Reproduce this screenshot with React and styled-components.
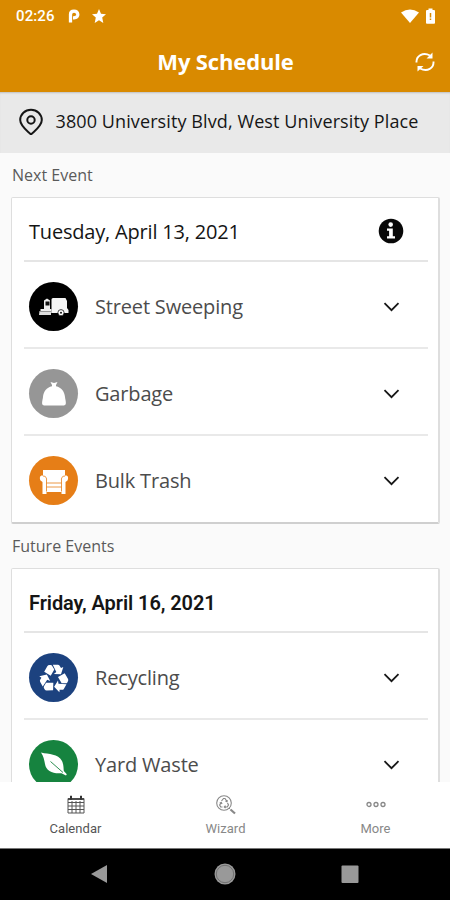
import React from "react";
import styled, { createGlobalStyle } from "styled-components";

const GlobalStyle = createGlobalStyle`
  * { box-sizing: border-box; }
  body { margin: 0; background: #fafafa; font-family: "Open Sans", sans-serif; }
  svg { display: block; flex: none; }
`;

const Screen = styled.div`
  width: 450px;
  height: 900px;
  display: flex;
  flex-direction: column;
  overflow: hidden;
  background: #fafafa;
`;

const StatusBar = styled.div`
  height: 32px;
  flex: none;
  display: flex;
  align-items: center;
  padding: 0 15px 0 16px;
  background: #d98a00;
  color: #fff;
`;

const Clock = styled.span`
  font: 500 15px/32px Roboto, sans-serif;
  letter-spacing: 0.1px;
  width: 52px;
`;

const StatusIcons = styled.div`
  display: flex;
  align-items: center;
  gap: ${(p) => p.$gap}px;
  margin-left: ${(p) => (p.$end ? "auto" : "0")};
`;

const AppBar = styled.header`
  height: 60px;
  flex: none;
  display: grid;
  grid-template-columns: 50px 1fr 50px;
  align-items: center;
  justify-items: center;
  background: #d98a00;
  color: #fff;
`;

const Title = styled.h1`
  grid-column: 2;
  margin: 0;
  padding: 0 0 2px 1px;
  font-size: 22px;
  line-height: 30px;
  font-weight: 700;
  letter-spacing: -0.15px;
`;

const AddressBar = styled.div`
  height: 61px;
  flex: none;
  display: flex;
  align-items: center;
  padding: 0 0 3px 18px;
  gap: 11.5px;
  background: #e9e9e9;
  box-shadow: inset 0 2px 2px -1px rgba(0, 0, 0, 0.18);
  color: #161616;
`;

const Address = styled.span`
  font-size: 18px;
  line-height: 26px;
  white-space: nowrap;
  letter-spacing: 0.1px;
`;

const Content = styled.main`
  flex: 1;
  min-height: 0;
  overflow: hidden;
  padding: 0 10px 0 11px;
`;

const SectionLabel = styled.h2`
  margin: 0;
  height: 44px;
  line-height: 45px;
  font-size: 16px;
  font-weight: 400;
  color: #5a5a5a;
  padding-left: 1px;
`;

const Card = styled.section`
  height: 327px;
  border: 1px solid #dedede;
  border-width: 1px 2px 2px 1px;
  border-bottom-color: #cfcfcf;
  border-radius: 2px;
  background: #fff;
  padding: 0 10px 0 12px;
`;

const DateRow = styled.div`
  height: 64px;
  display: flex;
  align-items: center;
  justify-content: space-between;
  padding: 4px 24px 0 5px;
  border-bottom: 2px solid #e5e5e5;
`;

const DateText = styled.h3`
  margin: 0;
  padding-top: 1px;
  font-family: ${(p) => (p.$strong ? "Roboto" : '"Open Sans"')}, sans-serif;
  font-size: 20px;
  line-height: 28px;
  font-weight: ${(p) => (p.$strong ? 600 : 400)};
  letter-spacing: ${(p) => (p.$strong ? -0.08 : -0.19)}px;
  color: #151515;
`;

const EventRow = styled.div`
  height: 87px;
  display: flex;
  align-items: center;
  padding: 4px 27px 0 5px;
  border-bottom: 2px solid #e9e9e9;
  &:last-child { border-bottom: 0; padding-top: 2px; }
`;

const Badge = styled.div`
  width: 49px;
  height: 49px;
  flex: none;
  border-radius: 50%;
  display: grid;
  place-items: center;
  color: #fff;
  background: ${(p) => p.$color};
`;

const EventName = styled.span`
  flex: 1;
  padding-left: 17px;
  font-size: 20px;
  line-height: 28px;
  font-weight: 400;
  letter-spacing: -0.17px;
  color: #4c4c4c;
`;

const TabBar = styled.nav`
  height: 66px;
  flex: none;
  display: grid;
  grid-template-columns: repeat(3, 1fr);
  background: #fff;
`;

const Tab = styled.div`
  display: flex;
  flex-direction: column;
  align-items: center;
  padding: 13px 0 0 1px;
  gap: 5px;
  color: ${(p) => (p.$active ? "#555" : "#888")};
`;

const TabLabel = styled.span`
  font: 400 13px/18px Roboto, sans-serif;
  letter-spacing: 0.05px;
`;

const SystemNav = styled.div`
  height: 52px;
  flex: none;
  display: flex;
  justify-content: center;
  align-items: center;
  gap: 102px;
  background: #000;
  border-top: 1px solid #777;
  padding-bottom: 1px;
`;

const Chevron = () => (
  <svg width="18" height="12" viewBox="0 0 18 12" fill="none" stroke="#171717" strokeWidth="1.8">
    <path d="M1.500 2.200l7 7 7-7" />
  </svg>
);

const InfoIcon = () => (
  <svg width="26" height="26" viewBox="0 0 26 26">
    <circle cx="13" cy="13" r="12.3" fill="#080808" />
    <circle cx="12.7" cy="6.6" r="2.3" fill="#fff" />
    <path d="M9 10.500h5.800v7.800H17v2.300H9v-2.300h2.100v-5.500H9z" fill="#fff" />
  </svg>
);

const TruckIcon = () => (
  <svg width="32" height="22" viewBox="0 0 32 22">
    <path d="M13.500 3.500q0-1.500 1.500-1.500h12.500l1.500 3v7l1.500 2v3H13.500z" fill="#f4f4f4" />
    <path d="M6 4.500L9 2.500l3 2V13h1.500v4H2.500v-4H6z" fill="#eee" />
    <path d="M7.500 5.500h4v4h-4z" fill="#111" />
    <path d="M1.500 15h11.500v4H1z" fill="#ddd" />
    <path d="M2 15.500h11" stroke="#777" strokeWidth=".7" />
    <circle cx="23" cy="16.700" r="3.100" fill="#fff" stroke="#111" strokeWidth=".8" />
    <circle cx="23" cy="16.700" r="1" fill="#111" />
  </svg>
);

const BagIcon = () => (
  <svg width="28" height="28" viewBox="0 0 28 28" fill="currentColor">
    <path d="M10.500 2l3.500 1 3.500-1-1.500 3v1.300c5.500 1.200 8.500 5.200 9 10.700.3 3 2.300 8-1 8.500H4C.700 25 2.700 20 3 17 3.500 11.500 6.500 7.500 12 6.300V5z" />
  </svg>
);

const ChairIcon = () => (
  <svg width="30" height="30" viewBox="0 0 30 30">
    <path d="M4 4h22v5.700c2.700-.7 4 1.800 2.500 4.800L26.500 16v12H22.500v-2h-15v2H3.500V16L1.500 14.500C0 11.500 1.300 9 4 9.700z" fill="#fff" />
    <path d="M4 10c3 0 4 2 3.500 5v10.500m18.500-15.500c-3 0-4 2-3.500 5v10.500M7.500 17h15M7.500 21h15" fill="none" stroke="#e67e17" strokeWidth=".8" />
  </svg>
);

const RecycleIcon = () => (
  <svg width="30" height="30" viewBox="0 0 30 30" fill="currentColor">
    {[0, 120, 240].map((turn) => (
      <g key={turn} transform={`rotate(${turn} 15 15.500)`}>
        <path d="M5.200 8.800L8.300 3.300Q9 2 10.500 2H11.700Q12.700 2 13.200 2.900L15.300 6.500 11.700 12.800z" />
        <path d="M13.800 1.800H18.800Q20.200 1.800 20.800 2.900L22 5 24.300 3.900 22 11.300 14.800 11 17.300 9z" />
      </g>
    ))}
  </svg>
);

const LeafIcon = () => (
  <svg width="30" height="28" viewBox="0 0 30 28">
    <path d="M2 1.500c8 2 17 1 21 8.500 1.800 4 1.500 7.500 1.800 10l3 3.200-.8 1.200-4.500-2.200C14 23 7 20 6 13 5.200 9 4.500 5 2 1.500z" fill="#fff" />
    <path d="M11.500 10.500l12.500 11" stroke="#16833f" strokeWidth=".9" />
  </svg>
);

const CalendarIcon = () => (
  <svg width="18" height="20" viewBox="0 0 18 20" fill="none" stroke="currentColor">
    <path d="M1 3.500h16v14.500H1zM1 7.500h16M1 11h16M1 14.500h16M5 6v12M9 6v12M13 6v12" strokeWidth="1" />
    <path d="M1 4.200h16" stroke="#444" strokeWidth="1.500" />
    <path d="M4 .8v4M14 .8v4" stroke="#333" strokeWidth="2" />
  </svg>
);

const WizardIcon = () => (
  <svg width="22" height="20" viewBox="0 0 22 20" fill="none" stroke="currentColor">
    <circle cx="9" cy="8" r="7.300" strokeWidth="1.100" />
    <path d="M14 13l1.200 1.200" strokeWidth="1" />
    <path d="M15.500 14.500l4.500 4" strokeWidth="2.200" />
    <path d="M6.500 6l2-2.500h1.500l2 3M10.500 6.200l1.500.5.3-1.600M12.500 8l1 2-1.300 2H9.500m1-1.300L9.300 12l1.200 1.200M7.500 12H5.700l-1-2 1.500-2.500M4.700 8l1.600-.5.7 1.500" strokeWidth="1.200" />
  </svg>
);

const MoreIcon = () => (
  <svg width="20" height="20" viewBox="0 0 20 20" fill="none" stroke="currentColor" strokeWidth="1.300">
    <circle cx="3" cy="9.500" r="2" />
    <circle cx="10" cy="9.500" r="2" />
    <circle cx="17" cy="9.500" r="2" />
  </svg>
);

const Event = ({ name, color, icon }) => (
  <EventRow>
    <Badge $color={color}>{icon}</Badge>
    <EventName>{name}</EventName>
    <Chevron />
  </EventRow>
);

export default function App() {
  return (
    <Screen>
      <GlobalStyle />
      <StatusBar>
        <Clock>02:26</Clock>
        <StatusIcons $gap={12}>
          <svg width="12" height="14" viewBox="0 0 12 14" fill="none" stroke="#fff">
            <path d="M2.500 13.500V5.500Q2.500 2.200 6 2.200t3.800 3.200T6 8.800H5" strokeWidth="3.300" />
          </svg>
          <svg width="14" height="14" viewBox="0 0 14 14" fill="#fff">
            <path d="M7 0l2 4.800 5 .4-3.800 3.400L11.300 14 7 11.200 2.700 14l1.100-5.400L0 5.200l5-.4z" />
          </svg>
        </StatusIcons>
        <StatusIcons $gap={7} $end>
          <svg width="18" height="14" viewBox="0 0 18 14" fill="#fff">
            <path d="M0 3.500Q9-2.500 18 3.500L9 14z" />
          </svg>
          <svg width="9" height="16" viewBox="0 0 9 16">
            <path d="M1 2h1.500V.5h4V2H8q1 0 1 1v12q0 .8-1 .8H1q-1 0-1-.8V3q0-1 1-1z" fill="#fff" />
            <path d="M4.500 5v4.500M4.500 10.500V12" stroke="#d98a00" strokeWidth="1.500" />
          </svg>
        </StatusIcons>
      </StatusBar>
      <AppBar>
        <Title>My Schedule</Title>
        <svg width="20" height="20" viewBox="0 0 20 20" fill="none" stroke="#fff" strokeWidth="1.900">
          <path d="M1.500 10.500C1 4 8-.5 15 3.500M18.500 9.500c.5 6.500-6 11-13.500 7" />
          <path d="M17.500.5v6h-6zM2.500 19.500v-5.500h6z" fill="#fff" stroke="none" />
        </svg>
      </AppBar>
      <AddressBar>
        <svg width="26" height="28" viewBox="0 0 26 28" fill="none" stroke="#161616" strokeWidth="2">
          <path d="M13 27.500C9 23.500 2.200 19 2.200 13a10.800 10.300 0 0121.600 0C23.800 19 17 23.500 13 27.500z" />
          <circle cx="13" cy="13" r="3.700" />
        </svg>
        <Address>3800 University Blvd, West University Place</Address>
      </AddressBar>
      <Content>
        <SectionLabel>Next Event</SectionLabel>
        <Card>
          <DateRow>
            <DateText>Tuesday, April 13, 2021</DateText>
            <InfoIcon />
          </DateRow>
          <Event name="Street Sweeping" color="#000" icon={<TruckIcon />} />
          <Event name="Garbage" color="#969696" icon={<BagIcon />} />
          <Event name="Bulk Trash" color="#e67e17" icon={<ChairIcon />} />
        </Card>
        <SectionLabel>Future Events</SectionLabel>
        <Card>
          <DateRow>
            <DateText $strong>Friday, April 16, 2021</DateText>
          </DateRow>
          <Event name="Recycling" color="#1c427f" icon={<RecycleIcon />} />
          <Event name="Yard Waste" color="#16833f" icon={<LeafIcon />} />
        </Card>
      </Content>
      <TabBar>
        <Tab $active><CalendarIcon /><TabLabel>Calendar</TabLabel></Tab>
        <Tab><WizardIcon /><TabLabel>Wizard</TabLabel></Tab>
        <Tab><MoreIcon /><TabLabel>More</TabLabel></Tab>
      </TabBar>
      <SystemNav>
        <svg width="22" height="22" viewBox="0 0 22 22" fill="#999"><path d="M18 2v18L2 11z" /></svg>
        <svg width="24" height="24" viewBox="0 0 24 24">
          <circle cx="12" cy="12" r="10.500" fill="#999" />
          <circle cx="12" cy="12" r="8.700" fill="none" stroke="#666" strokeWidth=".8" />
        </svg>
        <svg width="22" height="22" viewBox="0 0 22 22"><rect x="2.500" y="2.500" width="17" height="17.500" rx="1" fill="#999" /></svg>
      </SystemNav>
    </Screen>
  );
}
